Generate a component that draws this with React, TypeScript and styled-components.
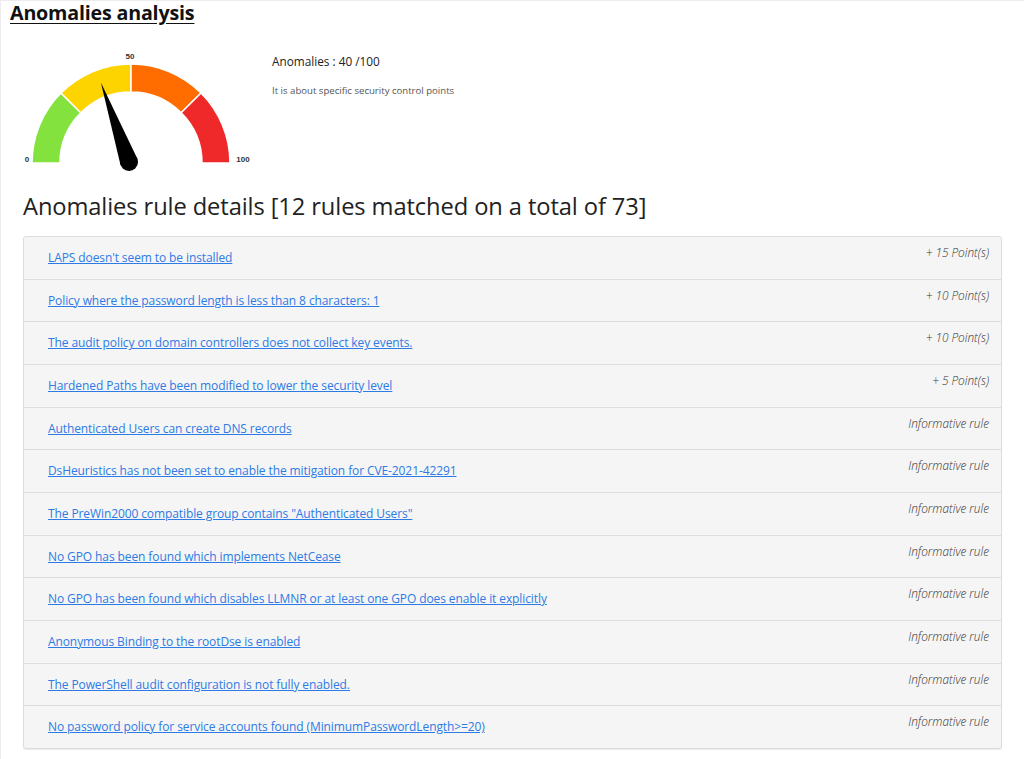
import React from "react";
import styled, { createGlobalStyle } from "styled-components";

const Global = createGlobalStyle`
  html, body { margin: 0; padding: 0; background: #fff; }
  body { font-family: "Open Sans", "Noto Sans", sans-serif; color: #222; }
`;

const Page = styled.div`
  min-height: 759px;
  box-sizing: border-box;
  border-left: 1px solid #ececec;
  border-top: 1px solid #ececec;
  padding: 0 22px 0 9px;
`;

const Title = styled.h1`
  margin: 0;
  padding-top: 0;
  font-size: 19.7px;
  line-height: 24px;
  font-weight: 700;
  text-decoration: underline;
  text-underline-offset: 3px;
  letter-spacing: -0.2px;
  color: #111;
`;

const Summary = styled.div`
  display: flex;
  align-items: flex-start;
  margin-top: 22px;
  height: 130px;
`;

const Gauge = styled.svg`
  display: block;
  flex: none;
`;

const Info = styled.div`
  padding-left: 9px;
  padding-top: 6px;
`;

const Score = styled.div`
  font-size: 11.8px;
  line-height: 16px;
  color: #222;
`;

const Note = styled.div`
  margin-top: 16px;
  font-size: 9.6px;
  line-height: 12px;
  color: #555;
`;

const Heading = styled.h2`
  margin: 14px 0 0 13px;
  font-size: 23.7px;
  line-height: 30px;
  font-weight: 400;
  color: #222;
  letter-spacing: -0.1px;
`;

const List = styled.div`
  margin: 15px 0 0 13px;
  border: 1px solid #ddd;
  border-radius: 3px;
  background: #f5f5f5;
  box-shadow: 0 1px 1px rgba(0, 0, 0, 0.08);
`;

const Row = styled.div<{ $last?: boolean }>`
  display: flex;
  justify-content: space-between;
  align-items: flex-start;
  height: 41.67px;
  padding: 0 12px 0 24px;
  border-bottom: ${(p) => (p.$last ? "none" : "1px solid #dedede")};
`;

const RuleLink = styled.a`
  margin-top: 13px;
  font-size: 12px;
  line-height: 16px;
  color: #2d7be5;
  text-decoration: underline;
  letter-spacing: -0.1px;
`;

const Points = styled.span`
  margin-top: 8px;
  font-size: 11.8px;
  line-height: 14px;
  font-style: italic;
  font-weight: 300;
  color: #333;
`;

const rules: [string, string][] = [
  ["LAPS doesn't seem to be installed", "+ 15 Point(s)"],
  ["Policy where the password length is less than 8 characters: 1", "+ 10 Point(s)"],
  ["The audit policy on domain controllers does not collect key events.", "+ 10 Point(s)"],
  ["Hardened Paths have been modified to lower the security level", "+ 5 Point(s)"],
  ["Authenticated Users can create DNS records", "Informative rule"],
  ["DsHeuristics has not been set to enable the mitigation for CVE-2021-42291", "Informative rule"],
  ["The PreWin2000 compatible group contains \"Authenticated Users\"", "Informative rule"],
  ["No GPO has been found which implements NetCease", "Informative rule"],
  ["No GPO has been found which disables LLMNR or at least one GPO does enable it explicitly", "Informative rule"],
  ["Anonymous Binding to the rootDse is enabled", "Informative rule"],
  ["The PowerShell audit configuration is not fully enabled.", "Informative rule"],
  ["No password policy for service accounts found (MinimumPasswordLength>=20)", "Informative rule"],
];

// gauge geometry (svg coords)
const CX = 121;
const CY = 116;
const RO = 99;
const RI = 71;

function pt(r: number, deg: number) {
  const a = (deg * Math.PI) / 180;
  return [CX + r * Math.cos(a), CY - r * Math.sin(a)];
}

function seg(from: number, to: number) {
  const a1 = 180 - from * 1.8;
  const a2 = 180 - to * 1.8;
  const [x1, y1] = pt(RO, a1);
  const [x2, y2] = pt(RO, a2);
  const [x3, y3] = pt(RI, a2);
  const [x4, y4] = pt(RI, a1);
  return `M${x1} ${y1} A${RO} ${RO} 0 0 1 ${x2} ${y2} L${x3} ${y3} A${RI} ${RI} 0 0 0 ${x4} ${y4} Z`;
}

function needle(value: number) {
  const deg = 180 - value * 1.8 + 1.5;
  const a = (deg * Math.PI) / 180;
  const bx = CX - 2;
  const by = CY - 1;
  const len = 84;
  const tx = bx + len * Math.cos(a);
  const ty = by - len * Math.sin(a);
  const w = 9;
  const px = Math.sin(a) * w;
  const py = Math.cos(a) * w;
  return { d: `M${bx - px} ${by - py} L${tx} ${ty} L${bx + px} ${by + py} Z`, bx, by };
}

const n = needle(40);

export default function App() {
  return (
    <>
      <Global />
      <Page>
        <Title>Anomalies analysis</Title>
        <Summary>
          <Gauge width={253} height={130} viewBox="0 0 253 130">
            <path d={seg(0, 25)} fill="#84e23f" stroke="#fff" strokeWidth={1.5} />
            <path d={seg(25, 50)} fill="#fdd400" stroke="#fff" strokeWidth={1.5} />
            <path d={seg(50, 75)} fill="#ff6c00" stroke="#fff" strokeWidth={1.5} />
            <path d={seg(75, 100)} fill="#ef2929" stroke="#fff" strokeWidth={1.5} />
            <path d={n.d} fill="#000" />
            <circle cx={n.bx} cy={n.by} r={9} fill="#000" />
            <text x={17} y={115} fontSize={8} fontWeight={700} fill="#333" fontFamily="'Liberation Sans', sans-serif" textAnchor="middle">0</text>
            <text x={120} y={12} fontSize={8} fontWeight={700} fill="#333" fontFamily="'Liberation Sans', sans-serif" textAnchor="middle">50</text>
            <text x={233} y={115} fontSize={8} fontWeight={700} fill="#333" fontFamily="'Liberation Sans', sans-serif" textAnchor="middle">100</text>
          </Gauge>
          <Info>
            <Score>Anomalies : 40 /100</Score>
            <Note>It is about specific security control points</Note>
          </Info>
        </Summary>
        <Heading>Anomalies rule details [12 rules matched on a total of 73]</Heading>
        <List>
          {rules.map(([t, p], i) => (
            <Row key={i} $last={i === rules.length - 1}>
              <RuleLink href="#">{t}</RuleLink>
              <Points>{p}</Points>
            </Row>
          ))}
        </List>
      </Page>
    </>
  );
}
